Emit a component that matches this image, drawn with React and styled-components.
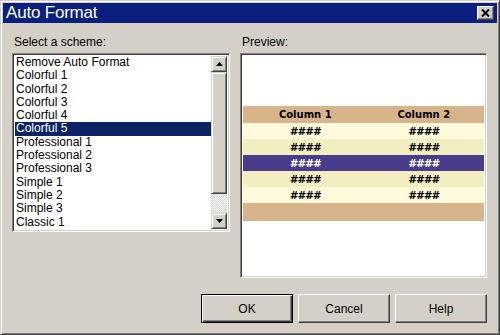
import React from 'react';
import styled, { createGlobalStyle } from 'styled-components';

const GlobalStyle = createGlobalStyle`
  html, body {
    margin: 0;
    padding: 0;
    background: #d4d0c8;
  }
  body {
    font-family: "Liberation Sans", Arial, sans-serif;
  }
`;

// Window frame
const Window = styled.div`
  box-sizing: border-box;
  width: 500px;
  height: 335px;
  background: #d4d0c8;
  border-top: 1px solid #d4d0c8;
  border-left: 1px solid #d4d0c8;
  border-right: 1px solid #404040;
  border-bottom: 1px solid #404040;
  box-shadow: inset 1px 1px 0 #ffffff, inset -1px -1px 0 #808080;
  padding: 2px;
  display: flex;
  flex-direction: column;
`;

const TitleBar = styled.div`
  height: 20px;
  background: #0a1f7e;
  display: flex;
  align-items: center;
  justify-content: space-between;
  padding: 0 3px 0 3px;
`;

const Title = styled.span`
  color: #ffffff;
  font-size: 17px;
  letter-spacing: -0.2px;
`;

const CloseButton = styled.div`
  box-sizing: border-box;
  width: 17px;
  height: 14px;
  background: #d4d0c8;
  border-top: 1px solid #ffffff;
  border-left: 1px solid #ffffff;
  border-right: 1px solid #404040;
  border-bottom: 1px solid #404040;
  box-shadow: inset -1px -1px 0 #808080;
  display: flex;
  align-items: center;
  justify-content: center;
`;

const Body = styled.div`
  flex: 1;
  display: flex;
  flex-direction: column;
  padding: 12px 10px 8px 9px;
`;

const Panels = styled.div`
  display: flex;
  gap: 10px;
`;

const Panel = styled.div`
  display: flex;
  flex-direction: column;
  width: ${p => p.width}px;
`;

const Label = styled.div`
  font-size: 12px;
  color: #000;
  height: 14px;
  line-height: 14px;
  margin-bottom: 4px;
  padding-left: 2px;
`;

// sunken 3D border
const Sunken = styled.div`
  box-sizing: border-box;
  border-top: 1px solid #808080;
  border-left: 1px solid #808080;
  border-right: 1px solid #ffffff;
  border-bottom: 1px solid #ffffff;
  box-shadow: inset 1px 1px 0 #404040, inset -1px -1px 0 #d4d0c8;
  background: #ffffff;
  height: ${p => p.height}px;
  padding: 2px;
`;

const ListBox = styled(Sunken)`
  display: flex;
`;

const ListItems = styled.div`
  flex: 1;
  overflow: hidden;
`;

const ListItem = styled.div`
  font-size: 12px;
  line-height: 13.3px;
  height: 13.3px;
  padding-left: 1px;
  white-space: nowrap;
  color: ${p => (p.selected ? '#ffffff' : '#000000')};
  background: ${p => (p.selected ? '#0c2466' : 'transparent')};
`;

const ScrollBar = styled.div`
  width: 16px;
  display: flex;
  flex-direction: column;
  background-color: #eceae6;
  background-image: repeating-conic-gradient(#ffffff 0% 25%, #d4d0c8 0% 50%);
  background-size: 2px 2px;
`;

const RaisedBlock = styled.div`
  box-sizing: border-box;
  width: 16px;
  height: ${p => p.height}px;
  background: #d4d0c8;
  border-top: 1px solid #d4d0c8;
  border-left: 1px solid #d4d0c8;
  border-right: 1px solid #404040;
  border-bottom: 1px solid #404040;
  box-shadow: inset 1px 1px 0 #ffffff, inset -1px -1px 0 #808080;
  display: flex;
  align-items: center;
  justify-content: center;
`;

const Track = styled.div`
  flex: 1;
`;

const Arrow = ({ down }) => (
  <svg width="7" height="4" viewBox="0 0 7 4">
    <path d={down ? 'M0 0H7L3.5 4Z' : 'M0 4H7L3.5 0Z'} fill="#000" />
  </svg>
);

const Preview = styled(Sunken)`
  padding: 52px 2px 0 2px;
`;

const Table = styled.div`
  display: grid;
  grid-template-columns: 1fr 1fr;
`;

const Cell = styled.div`
  height: ${p => (p.head ? '17px' : '16px')};
  display: flex;
  align-items: center;
  justify-content: center;
  font-family: "DejaVu Sans", Verdana, sans-serif;
  font-weight: bold;
  font-size: ${p => (p.head ? '10px' : '10.5px')};
  font-style: ${p => (p.head ? 'normal' : 'italic')};
  letter-spacing: ${p => (p.head ? '0' : '0.5px')};
  color: ${p => p.color};
  background: ${p => p.bg};
  padding-left: ${p => (p.first ? '4px' : '0')};
`;

const FooterRow = styled.div`
  grid-column: 1 / span 2;
  height: 18px;
  background: #d8b48a;
`;

const ButtonRow = styled.div`
  margin-top: auto;
  display: flex;
  justify-content: flex-end;
  gap: 5px;
  margin-bottom: 1px;
`;

const Button = styled.div`
  box-sizing: border-box;
  width: 92px;
  height: 29px;
  display: flex;
  align-items: center;
  justify-content: center;
  font-size: 12px;
  color: #000;
  background: #d4d0c8;
  border-top: 1px solid ${p => (p.isDefault ? '#000' : '#ffffff')};
  border-left: 1px solid ${p => (p.isDefault ? '#000' : '#ffffff')};
  border-right: 1px solid ${p => (p.isDefault ? '#000' : '#404040')};
  border-bottom: 1px solid ${p => (p.isDefault ? '#000' : '#404040')};
  box-shadow: ${p =>
    p.isDefault
      ? 'inset 1px 1px 0 #ffffff, inset -1px -1px 0 #404040, inset -2px -2px 0 #808080'
      : 'inset -1px -1px 0 #808080'};
`;

const schemes = [
  'Remove Auto Format',
  'Colorful 1',
  'Colorful 2',
  'Colorful 3',
  'Colorful 4',
  'Colorful 5',
  'Professional 1',
  'Professional 2',
  'Professional 3',
  'Simple 1',
  'Simple 2',
  'Simple 3',
  'Classic 1',
];

const rows = [
  { bg: '#fffadc', color: '#000' },
  { bg: '#f3eebf', color: '#000' },
  { bg: '#4a3c8c', color: '#ffffff' },
  { bg: '#f3eebf', color: '#000' },
  { bg: '#fffadc', color: '#000' },
];

export default function App() {
  return (
    <>
      <GlobalStyle />
      <Window>
        <TitleBar>
          <Title>Auto Format</Title>
          <CloseButton>
            <svg width="9" height="8" viewBox="0 0 9 8">
              <path d="M1 0.5L8 7.5M8 0.5L1 7.5" stroke="#000" strokeWidth="2" />
            </svg>
          </CloseButton>
        </TitleBar>

        <Body>
          <Panels>
            <Panel width={218}>
              <Label>Select a scheme:</Label>
              <ListBox height={179}>
                <ListItems>
                  {schemes.map((s, i) => (
                    <ListItem key={s} selected={i === 5}>
                      {s}
                    </ListItem>
                  ))}
                </ListItems>
                <ScrollBar>
                  <RaisedBlock height={16}>
                    <Arrow />
                  </RaisedBlock>
                  <RaisedBlock height={122} />
                  <Track />
                  <RaisedBlock height={16}>
                    <Arrow down />
                  </RaisedBlock>
                </ScrollBar>
              </ListBox>
            </Panel>

            <Panel width={247}>
              <Label>Preview:</Label>
              <Preview height={225}>
                <Table>
                  <Cell head first bg="#d8b48a" color="#000">Column 1</Cell>
                  <Cell head bg="#d8b48a" color="#000">Column 2</Cell>
                  {rows.map((r, i) => (
                    <React.Fragment key={i}>
                      <Cell first bg={r.bg} color={r.color}>####</Cell>
                      <Cell bg={r.bg} color={r.color}>####</Cell>
                    </React.Fragment>
                  ))}
                  <FooterRow />
                </Table>
              </Preview>
            </Panel>
          </Panels>

          <ButtonRow>
            <Button isDefault>OK</Button>
            <Button>Cancel</Button>
            <Button>Help</Button>
          </ButtonRow>
        </Body>
      </Window>
    </>
  );
}
